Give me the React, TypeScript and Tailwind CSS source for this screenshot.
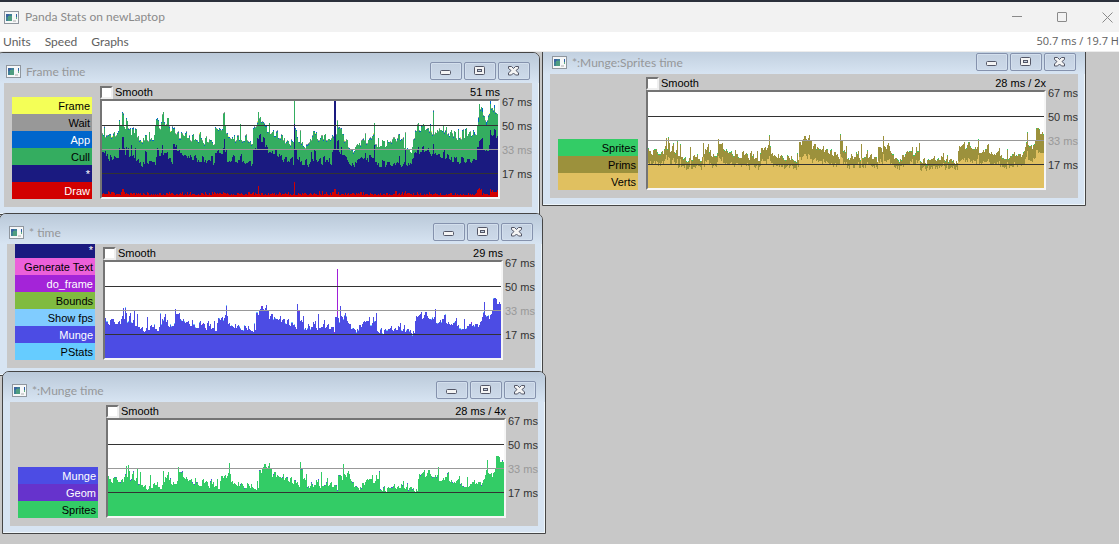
import React from "react";

/* ---- Sample traces: "position:level" pairs, three units to one graph pixel ---- */

type Segment = { origin: number; base: number; data: string };

const GRAPH_WIDTH = 396;
const GRAPH_HEIGHT = 96;

const mungeTrace: Segment[] = [
  {
    origin: 324,
    base: 453,
    data: "324:333 328:342 334:350 340:340 346:335 350:345 356:352 362:345 368:350 372:337 376:328 378:303 381:335 384:300 387:318 390:345 396:326 400:318 403:345 411:312 414:358 421:322 424:360 430:365 438:373 444:372 447:362 451:330 454:368 460:357 464:360 470:352 474:365 480:371 485:360 489:318 492:350 495:337 499:340 502:330 505:322 508:346 514:358 518:350 524:357 530:347 534:306 537:320 543:322 548:337 554:342 558:335 562:342 568:346 575:350 580:356 585:340 588:352 594:360 600:362 606:345 612:355 618:348 624:362 630:348 636:358 642:367 648:362 652:342 655:372 660:348 664:333 670:340 674:330 678:338 684:325 687:295 690:328 693:350 698:357 704:358 710:362 714:350 718:362 724:355 730:362 736:368 742:355 748:363 756:366 762:372 768:374 771:348 774:368 777:316 782:325 786:310 789:305 792:297 795:298 798:305 801:313 804:303 807:294",
  },
  {
    origin: -486,
    base: 453,
    data: "0:311 5:337 10:328 14:322 18:335 25:333 33:340 38:328 42:345 48:335 54:347 60:340 65:353 72:345 78:355 86:367 90:292 94:312 98:342 104:345 108:328 111:367 117:370 123:352 128:367 134:360 139:345 144:342 148:362 153:322 156:362 162:360 168:352 172:340 175:362 180:355 186:365 192:360 200:375 204:330 210:330 216:345 218:320 220:298 223:328 227:337 230:325 236:328 240:342 246:350 252:367 258:362 264:368 270:367 276:355 284:350 290:343 300:342 306:330 309:355 315:348 318:330 321:342 328:317 331:373 337:378 340:365 346:378 350:368 356:370 362:366 370:362 376:368 382:366 388:368 394:358 400:347 403:368 410:355 414:375 420:367 426:373 432:378 438:373 442:378 444:342 448:328 454:328 458:322 464:335 470:325 474:316 480:328 486:335 492:335 498:337 504:306 507:347 514:347 520:340 526:337 532:325 536:347 540:352 546:352 552:350 558:348 564:342 568:333 571:358 577:362 586:365 591:337 594:365 600:357 606:352 614:358 620:358 628:352 634:360 639:345 644:330 648:316 651:285 654:325 660:328 665:337 670:325 674:310 677:295 679:274 684:272 690:290 696:286 700:290",
  },
];

const frameTrace: Segment[] = [
  {
    origin: 306,
    base: 336,
    data: "306:145 312:122 315:155 320:150 328:148 334:155 340:145 346:152 352:143 357:105 360:120 366:80 370:85 373:125 378:100 382:108 385:128 390:128 394:150 397:130 402:145 406:130 410:155 416:165 424:172 430:160 436:150 440:165 446:140 450:162 456:165 462:150 465:122 469:102 474:105 478:128 484:110 487:88 491:112 496:120 501:100 506:122 510:140 516:122 520:130 526:145 532:140 538:158 544:140 548:150 554:145 560:160 566:150 570:165 576:150 582:165 590:165 597:148 602:160 608:175 614:160 620:170 626:162 634:165 640:180 644:125 650:132 656:130 662:135 668:120 670:85 674:120 678:145 684:155 690:160 696:155 702:150 706:168 712:150 718:165 721:118 724:165 730:168 736:150 742:165 748:170 754:178 758:128 762:122 766:125 770:110 774:80 778:100 784:112 790:110 795:122 800:140 806:115 809:145",
  },
  {
    origin: -504,
    base: 440,
    data: "0:250 6:245 12:258 18:243 24:262 32:250 38:268 44:278 50:270 56:280 62:265 68:275 72:152 75:232 80:260 84:275 90:240 94:278 100:288 108:280 114:278 120:265 126:255 130:243 134:252 140:265 146:268 152:255 158:265 162:255 168:270 175:265 180:270 186:255 192:152 198:250 201:208 204:230 210:232 216:250 222:272 228:265 234:290 240:300 250:305 256:290 262:280 268:278 274:270 280:262 284:248 288:278 294:268 300:260 308:252 312:218 315:280 320:290 325:262 328:290 336:270 344:290 350:268 358:275 366:265 374:265 380:262 385:250 390:270 396:265 402:292 406:245 409:298 415:295 420:305 426:290 430:265 436:240 441:222 446:240 452:228 458:222 464:238 470:232 476:242 480:222 484:245 490:178 493:250 500:240 508:232 514:240 520:225 523:245 528:230 532:250 540:245 548:258 552:242 558:262 564:235 567:262 572:265 576:240 582:262 586:235 590:258 596:245 602:258 608:240 614:250 620:225 624:200 627:162 630:175 634:170 638:195 644:210 650:208 655:195 660:152 664:172 668:180 672:165 676:185 680:190 683:180",
  },
];

const starTrace: Segment[] = [
  {
    origin: 306,
    base: 336,
    data: "306:200 312:205 318:212 324:222 330:210 336:225 342:212 350:220 356:190 362:195 367:155 371:190 376:210 378:185 384:190 388:215 392:180 396:212 402:220 406:190 409:228 416:235 424:243 430:232 436:198 440:235 448:228 456:230 464:240 468:215 471:190 476:212 482:205 487:180 490:210 498:205 504:222 512:230 518:178 524:185 530:198 540:205 550:212 556:210 562:220 570:210 576:225 582:212 590:230 600:230 606:212 612:230 624:225 634:212 640:240 646:205 652:198 660:205 668:190 671:162 675:200 680:230 690:232 697:215 705:232 714:225 720:212 725:232 735:238 745:232 754:242 758:192 766:190 772:160 778:150 782:170 790:155 796:185 804:205",
  },
  {
    origin: -504,
    base: 440,
    data: "0:305 8:310 14:300 20:318 28:310 36:328 44:320 52:335 60:325 68:345 72:220 75:300 80:325 90:335 96:345 104:330 110:345 118:340 122:305 126:325 132:300 138:328 146:325 152:340 158:320 164:335 172:330 180:340 186:305 192:152 198:300 202:272 206:305 212:290 216:315 224:318 230:330 238:342 248:345 256:335 264:325 272:320 280:325 284:308 288:328 296:315 304:320 312:285 315:335 322:345 330:350 336:330 344:350 352:335 360:345 370:340 380:335 386:318 390:345 400:340 405:295 408:345 418:345 426:325 432:308 440:295 448:310 456:290 462:305 472:300 480:310 486:312 490:280 493:310 502:315 510:320 518:305 524:325 530:312 538:325 546:335 552:320 560:335 568:340 574:320 582:335 590:325 600:335 610:325 618:330 622:290 628:272 636:262 640:300 650:302 658:285 660:240 664:255 672:235 678:262 683:250",
  },
];

/* Repeatable jitter in 0..1 for a column. */
function jitter(x: number, seed: number): number {
  const v = Math.sin(x * 12.9898 + seed * 78.233) * 43758.5453;
  return v - Math.floor(v);
}

function expand(segments: Segment[], seed: number): number[] {
  const points = segments
    .flatMap((s) =>
      s.data.split(" ").map((pair) => {
        const [p, level] = pair.split(":").map(Number);
        return { x: Math.round((p - s.origin) / 3), h: (s.base - level) / 3 };
      }),
    )
    .sort((a, b) => a.x - b.x);
  const out: number[] = [];
  let i = 0;
  for (let x = 0; x < GRAPH_WIDTH; x++) {
    while (i + 1 < points.length && points[i + 1].x <= x) i++;
    const wobble = points[i].x === x || points[i].h > 95 ? 0 : Math.round((jitter(x, seed) - 0.5) * 4);
    out.push(Math.min(GRAPH_HEIGHT, Math.round(points[i].h) + wobble));
  }
  return out;
}

const munge = expand(mungeTrace, 1);
const frame = expand(frameTrace, 2);
const star = expand(starTrace, 3).map((h, x) => Math.min(h, frame[x]));

/* Some columns carry a thin cap from one of the minor collectors. */
function capped(values: number[], seed: number, share: number, size: number): number[] {
  return values.map((h, x) => (h < 90 && jitter(x, seed) < share ? h - size : h));
}

const draw = star.map((_, x) => {
  const base = 2 + Math.round(jitter(x, 4) * jitter(x, 5) * 4) + (x < 12 || (x > 110 && x < 126) ? 1 : 0);
  if (x === 20 || x === 21) return 8;
  if (x === 156) return 11;
  if (x === 192) return 15;
  if (x === 232 || x === 233) return 8;
  if (x > 374 && x < 380) return 7 + (x % 3);
  if (x > 387) return 4 + Math.round(jitter(x, 6) * 4);
  return base;
});

const verts = munge.map((h, x) => Math.round(h * 0.54 + 3 + jitter(x, 7) * 4));

type Layer = { color: string; values: number[] };

const frameApp = capped(frame, 8, 0.45, 1);
const frameCull = capped(frameApp, 9, 0.5, 1).map((h, x) => (x > 370 && x % 4 === 0 ? h - 3 : h));

const frameLayers: Layer[] = [
  { color: "#f4ff57", values: frame.map((h, x) => (x % 29 === 10 ? h + 1 : h)) },
  { color: "#989898", values: frame },
  { color: "#0066cc", values: frameApp },
  { color: "#34ad60", values: frameCull },
  { color: "#1a1a80", values: star.map((h, x) => Math.min(h, frameCull[x])) },
  { color: "#d20000", values: draw },
];

const starLayers: Layer[] = [
  { color: "#a01fd9", values: munge.map((h, x) => (x === 232 ? 89 : h)) },
  { color: "#66ccff", values: capped(munge, 10, 0.14, 1) },
  { color: "#4c4ce4", values: capped(munge, 11, 0.22, 1).map((h, x) => (x === 232 ? 42 : h)) },
];

const mungeLayers: Layer[] = [
  { color: "#4c4ce4", values: munge },
  { color: "#33cc66", values: capped(munge, 12, 0.14, 1) },
];

const spriteLayers: Layer[] = [
  { color: "#33cc66", values: munge },
  { color: "#9c913c", values: capped(munge, 13, 0.3, 1) },
  { color: "#e0c060", values: verts },
];

function areaPath(values: number[]): string {
  const steps = values.map((h) => `V${GRAPH_HEIGHT - h}h1`).join("");
  return `M0 ${GRAPH_HEIGHT}${steps}V${GRAPH_HEIGHT}Z`;
}

/* ---- Pieces ---- */

function AppIcon() {
  return (
    <svg width="15" height="13" viewBox="0 0 15 13" shapeRendering="crispEdges" aria-hidden="true" className="shrink-0">
      <rect width="15" height="13" fill="#8f969e" />
      <rect x="1" y="1" width="13" height="11" fill="#f6f7f8" />
      <rect x="2" y="3" width="6" height="7" fill="#3f7f96" />
      <rect x="2" y="3" width="3" height="3" fill="#3a64a0" />
      <rect x="4" y="5" width="4" height="5" fill="#4f9d80" />
      <rect x="12" y="3" width="1" height="3" fill="#2f5fa5" />
      <rect x="12" y="6" width="1" height="2" fill="#5fae83" />
      <rect x="9" y="9" width="3" height="2" fill="#d3d3d3" />
    </svg>
  );
}

function CaptionButton({ label, children }: { label: string; children: React.ReactNode }) {
  return (
    <button
      type="button"
      aria-label={label}
      className="flex h-[18px] w-8 items-center justify-center rounded-[2px] border border-[#8592ad] bg-linear-to-b from-[#c3d0e0] to-[#cddaea] shadow-[inset_0_0_0_1px_#d3dfed]"
    >
      {children}
    </button>
  );
}

function CaptionButtons() {
  return (
    <div className="flex gap-0.5">
      <CaptionButton label="Minimize">
        <svg width="12" height="12" viewBox="0 0 12 12">
          <rect x="0.5" y="5.5" width="10" height="4" rx="1" fill="#f4f4f4" stroke="#535666" />
        </svg>
      </CaptionButton>
      <CaptionButton label="Maximize">
        <svg width="12" height="10" viewBox="0 0 12 10">
          <rect x="0.5" y="0.5" width="10" height="8" rx="1" fill="#f4f4f4" stroke="#535666" />
          <rect x="3.5" y="3.5" width="4" height="2" fill="#c3d0e0" stroke="#535666" />
        </svg>
      </CaptionButton>
      <CaptionButton label="Close">
        <svg width="12" height="10" viewBox="0 0 12 10">
          <path
            d="M.5 .5h3l2 2 2-2h3v2L8 4.500l2.500 2.500v2h-3l-2-2-2 2h-3v-2L3 4.500.5 2.500Z"
            fill="#f4f4f4"
            stroke="#535666"
            strokeLinejoin="round"
          />
        </svg>
      </CaptionButton>
    </div>
  );
}

type LegendRow = { name: string; className: string };

function StripChart({ layers, title }: { layers: Layer[]; title: string }) {
  return (
    <div className="h-[100px] w-[400px] border-2 border-t-[#747474] border-r-[#f6f6f6] border-b-[#f6f6f6] border-l-[#747474] bg-white">
      <svg
        width={GRAPH_WIDTH}
        height={GRAPH_HEIGHT}
        viewBox={`0 0 ${GRAPH_WIDTH} ${GRAPH_HEIGHT}`}
        shapeRendering="crispEdges"
        role="img"
        aria-label={title}
        className="block"
      >
        {layers.map((layer) => (
          <path key={layer.color} d={areaPath(layer.values)} fill={layer.color} />
        ))}
        <rect y="24" width={GRAPH_WIDTH} height="1" fill="#333333" />
        <rect y="48" width={GRAPH_WIDTH} height="1" fill="#999999" />
        <rect y="72" width={GRAPH_WIDTH} height="1" fill="#333333" />
      </svg>
    </div>
  );
}

type StatsWindowProps = {
  title: string;
  value: string;
  legend: LegendRow[];
  layers: Layer[];
  place: string;
};

function StatsWindow({ title, value, legend, layers, place }: StatsWindowProps) {
  return (
    <section
      className={`absolute w-[544px] overflow-hidden rounded-t-[7px] border border-[#454545] bg-[#d7e4f2] shadow-[inset_-1px_-1px_0_#eef6fb] ${place}`}
    >
      <header className="flex h-[30px] items-center bg-linear-to-b from-[#bac9d9] to-[#d7e4f2] pt-1.5 pr-[9px] pl-[9px]">
        <AppIcon />
        <h2 className="ml-[5px] flex-1 pt-0.5 text-[12px] leading-4 text-[#959799]">{title}</h2>
        <CaptionButtons />
      </header>
      <div className="mx-[7px] mb-[7px] flex h-[124px] overflow-hidden bg-[#c8c8c8] pb-2 pl-2 font-['Liberation_Sans',Arial,sans-serif] text-[11px]">
        <ul className="flex h-[116px] w-20 shrink-0 flex-col justify-end overflow-hidden text-right whitespace-nowrap">
          {legend.map((row) => (
            <li key={row.name} className={`h-[17px] shrink-0 pr-0.5 leading-[18px] ${row.className}`}>
              {row.name}
            </li>
          ))}
        </ul>
        <div className="ml-2 flex w-[400px] shrink-0 flex-col">
          <div className="flex h-4 items-end justify-between">
            <label className="flex h-[14px] items-center gap-0.5 leading-[14px] text-black">
              <input
                type="checkbox"
                className="size-[13px] appearance-none border-2 border-t-[#747474] border-r-[#efefef] border-b-[#efefef] border-l-[#747474] bg-white checked:bg-[#333]"
              />
              Smooth
            </label>
            <span className="leading-[14px] text-black">{value}</span>
          </div>
          <StripChart layers={layers} title={title} />
        </div>
        <div className="ml-0.5 flex flex-col pt-[7px] leading-6 whitespace-nowrap text-[#333333]">
          <span>67 ms</span>
          <span>50 ms</span>
          <span className="text-[#999999]">33 ms</span>
          <span>17 ms</span>
        </div>
      </div>
    </section>
  );
}

export default function App() {
  return (
    <div className="flex min-h-screen flex-col overflow-hidden bg-[#c8c8c8] font-[Lato,'Open_Sans',sans-serif] text-[12px]">
      <div className="h-0.5 bg-[#2c313c]" />
      <header className="flex h-[30px] items-center bg-[#f2f2f2] pr-1.5 pl-1">
        <AppIcon />
        <h1 className="ml-1.5 flex-1 text-[#8a8a8a]">Panda Stats on newLaptop</h1>
        <div className="flex gap-[34px] text-[#8a8a8a]">
          <button type="button" aria-label="Minimize">
            <svg width="11" height="11" viewBox="0 0 11 11" stroke="currentColor">
              <path d="M0 4.500H10" />
            </svg>
          </button>
          <button type="button" aria-label="Maximize">
            <svg width="11" height="11" viewBox="0 0 11 11" stroke="currentColor" fill="none">
              <rect x=".5" y=".5" width="9" height="9" rx=".5" />
            </svg>
          </button>
          <button type="button" aria-label="Close">
            <svg width="11" height="11" viewBox="0 0 11 11" stroke="currentColor">
              <path d="M.5 .5l10 10M10.500 .5l-10 10" />
            </svg>
          </button>
        </div>
      </header>
      <nav className="flex h-5 items-center border-b border-b-[#ececec] bg-white pl-[3px] whitespace-nowrap text-[#606060]">
        <div className="flex flex-1 gap-3.5">
          <button type="button">Units</button>
          <button type="button">Speed</button>
          <button type="button">Graphs</button>
        </div>
        <span className="font-['Open_Sans','Noto_Sans',sans-serif] text-[11px]">50.7 ms / 19.7 H</span>
      </nav>

      <main className="relative flex-1 overflow-hidden bg-[#c8c8c8]">
        <StatsWindow
          place="-left-1 top-0"
          title="Frame time"
          value="51 ms"
          layers={frameLayers}
          legend={[
            { name: "Frame", className: "bg-[#f4ff57] text-black" },
            { name: "Wait", className: "bg-[#989898] text-black" },
            { name: "App", className: "bg-[#0066cc] text-white" },
            { name: "Cull", className: "bg-[#34ad60] text-black" },
            { name: "*", className: "bg-[#1a1a80] text-white" },
            { name: "Draw", className: "bg-[#d20000] text-white" },
          ]}
        />
        <StatsWindow
          place="left-[542px] -top-[9px]"
          title="*:Munge:Sprites time"
          value="28 ms / 2x"
          layers={spriteLayers}
          legend={[
            { name: "Sprites", className: "bg-[#33cc66] text-black" },
            { name: "Prims", className: "bg-[#9c913c] text-black" },
            { name: "Verts", className: "bg-[#e0c060] text-black" },
          ]}
        />
        <StatsWindow
          place="-left-px top-[161px]"
          title="* time"
          value="29 ms"
          layers={starLayers}
          legend={[
            { name: "*", className: "bg-[#1a1a80] text-white" },
            { name: "Generate Text", className: "bg-[#ec60da] text-black" },
            { name: "do_frame", className: "bg-[#a424d8] text-white" },
            { name: "Bounds", className: "bg-[#80bb40] text-black" },
            { name: "Show fps", className: "bg-[#80ccff] text-black" },
            { name: "Munge", className: "bg-[#4c4ce4] text-white" },
            { name: "PStats", className: "bg-[#66ccff] text-black" },
          ]}
        />
        <StatsWindow
          place="left-0.5 top-[319px]"
          title="*:Munge time"
          value="28 ms / 4x"
          layers={mungeLayers}
          legend={[
            { name: "Munge", className: "bg-[#4c4ce4] text-white" },
            { name: "Geom", className: "bg-[#6633cc] text-white" },
            { name: "Sprites", className: "bg-[#33cc66] text-black" },
          ]}
        />
      </main>
    </div>
  );
}
